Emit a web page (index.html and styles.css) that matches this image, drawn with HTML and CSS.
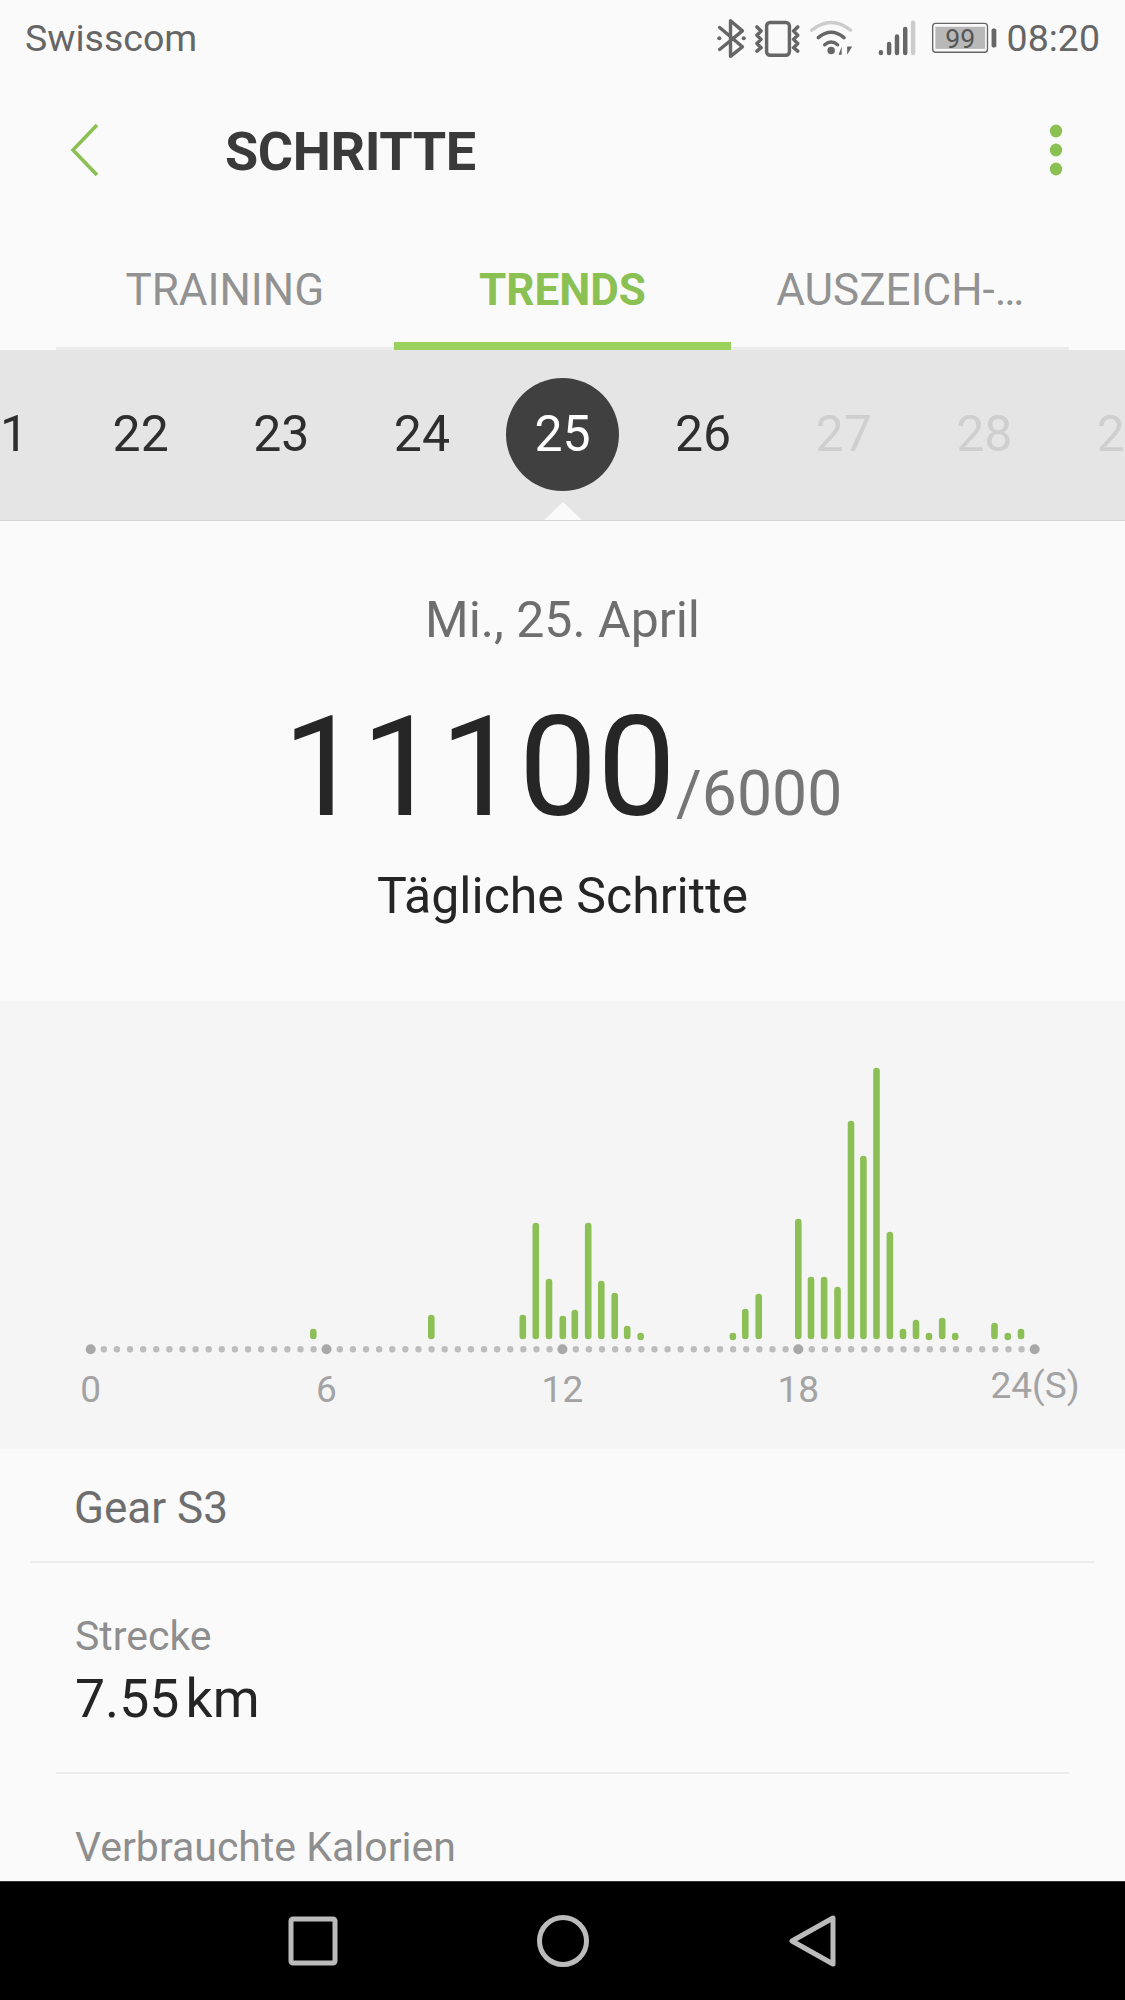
FILE: index.html
```html
<!DOCTYPE html>
<html lang="de">
<head>
<meta charset="utf-8">
<title>Schritte</title>
<link rel="stylesheet" href="styles.css">
</head>
<body>
<div class="screen">
  <div class="status">
    <span class="carrier">Swisscom</span>
    <div class="status-icons">
      <svg class="ic-bt" viewBox="105 55 90 115"><path d="M118 80 185 137 150 165V60L185 90 118 145" fill="none" stroke="#666" stroke-width="10" stroke-linejoin="round" stroke-linecap="round"/><circle cx="117" cy="112" r="6" fill="#666"/><circle cx="189" cy="112" r="6" fill="#666"/></svg>
      <svg class="ic-vib" viewBox="224 58 135 107"><rect x="260" y="65" width="66" height="95" rx="10" fill="none" stroke="#666" stroke-width="10"/><path d="M232 78 244 90 232 102 244 114 232 126 244 138 232 148M350 78 338 90 350 102 338 114 350 126 338 138 350 148" fill="none" stroke="#666" stroke-width="10" stroke-linejoin="round" stroke-linecap="round"/></svg>
      <svg class="ic-wifi" viewBox="386 60 130 106"><path d="M393 90Q450 45 507 90" fill="none" stroke="#ccc" stroke-width="10" stroke-linecap="round"/><path d="M412 112Q450 80 488 112M431 133Q450 116 469 133" fill="none" stroke="#666" stroke-width="10" stroke-linecap="round"/><circle cx="450" cy="150" r="11" fill="#666"/><path d="M481 138V162H472ZM497 162V138H512Z" fill="#666"/></svg>
      <svg class="ic-signal" viewBox="598 60 110 105"><g fill="none" stroke-width="13" stroke-linecap="round"><path d="M606 154V156M630 130V156M653 108V156M677 86V156" stroke="#666"/><path d="M700 68V156" stroke="#ccc"/></g></svg>
      <svg class="ic-bat" viewBox="755 66 195 94"><rect x="759" y="70" width="161" height="85" rx="9" fill="none" stroke="#666" stroke-width="4"/><rect x="767" y="80" width="146" height="65" fill="#b8b8b8"/><rect x="932" y="85" width="14" height="56" rx="5" fill="#666"/><text class="bat-text" x="840" y="141" text-anchor="middle">99</text></svg>
      <span class="clock">08:20</span>
    </div>
  </div>

  <header class="appbar">
    <svg class="back" viewBox="0 0 30 54"><path d="M27 2 3 27 27 52" fill="none" stroke="#8bc053" stroke-width="3.6"/></svg>
    <h1 class="title">SCHRITTE</h1>
    <svg class="more" viewBox="0 0 14 52"><ellipse cx="7" cy="7" rx="6.2" ry="6.5" fill="#8bc053"/><ellipse cx="7" cy="26" rx="6.2" ry="6.5" fill="#8bc053"/><ellipse cx="7" cy="45" rx="6.2" ry="6.5" fill="#8bc053"/></svg>
  </header>

  <nav class="tabs">
    <div class="tab">TRAINING</div>
    <div class="tab tab-active">TRENDS</div>
    <div class="tab">AUSZEICH-…</div>
  </nav>

  <div class="dates">
    <span class="date">21</span>
    <span class="date">22</span>
    <span class="date">23</span>
    <span class="date">24</span>
    <span class="date date-current"><span class="date-circle">25</span></span>
    <span class="date">26</span>
    <span class="date date-future">27</span>
    <span class="date date-future">28</span>
    <span class="date date-future">29</span>
  </div>

  <section class="summary">
    <div class="day">Mi., 25. April</div>
    <div class="count"><span class="count-value">11100</span><span class="count-goal">/6000</span></div>
    <div class="count-label">Tägliche Schritte</div>
  </section>

  <section class="chart">
    <svg class="chart-svg" viewBox="0 1001 1125 448">
      <path class="axis-dots" d="M90.7 1349.3H1034.7"/>
      <g class="axis-major">
        <circle cx="90.7" cy="1349.3" r="5"/><circle cx="326.5" cy="1349.3" r="5"/><circle cx="562.4" cy="1349.3" r="5"/><circle cx="798.3" cy="1349.3" r="5"/><circle cx="1034.7" cy="1349.3" r="5"/>
      </g>
      <path class="bars" d="M313.3 1332V1336M431.3 1318V1336M522.8 1318V1336M535.8 1226V1336M549 1282V1336M562.8 1319V1336M574.8 1313V1336M588.2 1226V1336M601.3 1284V1336M614.7 1296V1336M627.2 1329V1336M640.6 1337V1336M732.9 1337V1336M745.3 1312V1336M758.7 1297V1336M798.3 1222V1336M811 1280V1336M824.1 1280V1336M837.5 1290V1336M851 1124V1336M863.4 1159V1336M876.5 1071V1336M889.9 1235V1336M903 1332V1336M916 1323V1336M929 1337V1336M942.2 1321V1336M955.2 1337V1336M994.5 1326V1336M1007.8 1337V1336M1021 1332V1336"/>
      <g class="axis-labels">
        <text x="90.7" y="1402">0</text>
        <text x="326.5" y="1402">6</text>
        <text x="562.4" y="1402">12</text>
        <text x="798.3" y="1402">18</text>
        <text x="1035" y="1398">24(S)</text>
      </g>
    </svg>
  </section>

  <main class="details">
    <div class="row-device">Gear S3</div>
    <div class="row-stat row-first">
      <div class="stat-label">Strecke</div>
      <div class="stat-value">7.55 km</div>
    </div>
    <div class="row-stat">
      <div class="stat-label">Verbrauchte Kalorien</div>
    </div>
  </main>

  <footer class="navbar">
    <svg class="nav-ic" viewBox="0 0 60 60"><rect x="8" y="8" width="44" height="44" rx="2" fill="none" stroke="#bbb" stroke-width="5"/></svg>
    <svg class="nav-ic" viewBox="0 0 60 60"><circle cx="30" cy="30" r="23.5" fill="none" stroke="#bbb" stroke-width="5"/></svg>
    <svg class="nav-ic" viewBox="0 0 60 60"><path d="M9 30 50 7V53Z" fill="none" stroke="#bbb" stroke-width="5" stroke-linejoin="round"/></svg>
  </footer>
</div>
</body>
</html>
```
FILE: styles.css
```css
* { box-sizing: border-box; }
html, body { margin: 0; padding: 0; background: #fafafa; }
body { font-family: Roboto, "Liberation Sans", sans-serif; }
.screen { width: 1125px; height: 2000px; display: flex; flex-direction: column; overflow: hidden; }

.status { height: 76px; flex: none; display: flex; align-items: center; justify-content: space-between; padding: 0 25px 0 25px; color: #666; font-size: 37.5px; }
.carrier { color: #666; }
.status-icons { display: flex; align-items: center; }
.status-icons svg { display: block; flex: none; }
.ic-bt { width: 31px; height: 39px; }
.ic-vib { width: 47px; height: 37px; margin-left: 8px; }
.ic-wifi { width: 45px; height: 36px; margin-left: 8px; }
.ic-signal { width: 38px; height: 36px; margin-left: 24.5px; }
.ic-bat { width: 67px; height: 32px; margin-left: 15px; }
.clock { margin-left: 8.5px; }
.bat-text { font: 400 78px Roboto, sans-serif; fill: #555; }

.appbar { height: 148px; flex: none; display: flex; align-items: center; padding: 0 62px 0 70px; }
.back { width: 30px; height: 54px; flex: none; }
.title { margin: 3px 0 0 125px; flex: 1; font-size: 54px; font-weight: 700; color: #3a3a3a; letter-spacing: -0.4px; }
.more { width: 14px; height: 52px; flex: none; }

.tabs { height: 126px; flex: none; margin: 0 56px; display: grid; grid-template-columns: repeat(3, 1fr); border-bottom: 3px solid #ececec; }
.tab { display: flex; justify-content: center; align-items: center; font-size: 44px; color: #929292; height: 126px; padding-top: 6px; white-space: nowrap; }
.tab-active { color: #8bc053; font-weight: 700; padding-top: 14px; border-bottom: 8px solid #9ad15c; }

.dates { position: relative; height: 171px; flex: none; display: flex; justify-content: center; align-items: center; padding-bottom: 2px; background: #e5e5e5; border-bottom: 1px solid #d4d4d4; overflow: hidden; }
.dates::after { content: ""; position: absolute; left: 542.5px; bottom: -1px; width: 0; height: 0; border-left: 20px solid transparent; border-right: 20px solid transparent; border-bottom: 19px solid #fafafa; }
.date { flex: none; width: 140.6px; text-align: center; font-size: 50px; color: #2e2e2e; }
.date-current { display: flex; justify-content: center; }
.date-circle { width: 113px; height: 113px; border-radius: 50%; background: #404040; color: #fff; display: flex; align-items: center; justify-content: center; }
.date-future { color: #cfcfcf; }

.summary { height: 480px; flex: none; display: flex; flex-direction: column; align-items: center; }
.day { margin-top: 69px; font-size: 50px; line-height: 60px; color: #6e6e6e; }
.count { margin-top: 42px; height: 150px; line-height: 150px; white-space: nowrap; display: flex; align-items: baseline; }
.count-value { font-size: 140px; font-weight: 400; color: #262626; }
.count-goal { font-size: 62.5px; color: #767676; }
.count-label { margin-top: 24px; font-size: 50px; line-height: 60px; color: #252525; }

.chart { height: 448px; flex: none; background: #f5f5f5; }
.chart-svg { display: block; width: 1125px; height: 448px; }
.axis-dots { fill: none; stroke: #bdbdbd; stroke-width: 6.4; stroke-linecap: round; stroke-dasharray: 0 13.111; }
.axis-major { fill: #a8a8a8; }
.bars { fill: none; stroke: #8cbf56; stroke-width: 6.6; stroke-linecap: round; }
.axis-labels { font-size: 37px; fill: #a3a3a3; text-anchor: middle; }

.details { flex: 1; min-height: 0; overflow: hidden; }
.row-device { height: 114px; margin: 0 31px; padding: 5px 43px 0; border-bottom: 2px solid #ececec; display: flex; align-items: center; font-size: 44px; color: #6e6e6e; }
.row-stat { margin: 0 56px; padding: 49px 19px 0; }
.row-first { height: 211px; border-bottom: 2px solid #ececec; }
.stat-label { font-size: 41px; line-height: 48px; color: #8e8e8e; }
.stat-value { margin-top: 3px; font-size: 53.5px; line-height: 72px; color: #252525; word-spacing: -7px; }

.navbar { height: 119px; flex: none; background: #000; border-top: 1px solid #333; display: grid; grid-template-columns: repeat(3, 250px); justify-content: center; justify-items: center; align-items: center; }
.nav-ic { width: 60px; height: 60px; display: block; }
```
